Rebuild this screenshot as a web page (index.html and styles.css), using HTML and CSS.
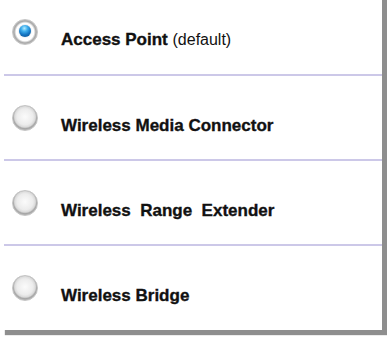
FILE: index.html
```html
<!DOCTYPE html>
<html>
<head>
<meta charset="utf-8">
<link rel="stylesheet" href="styles.css">
</head>
<body>
<div class="card">
  <div class="option first">
    <span class="radio checked"></span>
    <span class="label"><b>Access Point</b> <span class="note">(default)</span></span>
  </div>
  <div class="option">
    <span class="radio"></span>
    <span class="label"><b>Wireless Media Connector</b></span>
  </div>
  <div class="option">
    <span class="radio"></span>
    <span class="label"><b class="wide">Wireless  Range  Extender</b></span>
  </div>
  <div class="option last">
    <span class="radio"></span>
    <span class="label"><b>Wireless Bridge</b></span>
  </div>
</div>
</body>
</html>
```
FILE: styles.css
```css
html, body {
  margin: 0;
  background: #ffffff;
}
body {
  min-height: 337px;
  font-family: "Liberation Sans", Arial, sans-serif;
  color: #111;
  overflow: hidden;
}
.card {
  width: 382px;
  height: 340px;
  margin-top: -10px;
  padding: 10px 0 0 4px;
  box-sizing: border-box;
  background: #fff;
  box-shadow: 5px 5px 1px #8e8e8e;
}
.option {
  display: flex;
  align-items: center;
  height: 85px;
  padding-top: 16px;
  box-sizing: border-box;
  border-bottom: 2px solid #ccc8e8;
}
.option.first {
  height: 76px;
  padding-top: 5px;
}
.option.last {
  height: 84px;
  border-bottom: none;
}
.radio {
  flex: none;
  width: 26px;
  height: 26px;
  margin-left: 8px;
  margin-bottom: 16px;
  border-radius: 50%;
  box-sizing: border-box;
  border: 1px solid #c4c4c4;
  background: radial-gradient(circle at 50% 45%, #fbfbfb 0%, #ececec 45%, #dadada 58%, #a6a6a6 66%, #bdbdbd 78%, #e2e2e2 92%, #d0d0d0 100%);
  position: relative;
}
.radio.checked {
  background: radial-gradient(circle at 50% 50%, #ffffff 0%, #ffffff 52%, #a8a8a8 64%, #c4c4c4 78%, #e4e4e4 92%, #cccccc 100%);
}
.radio.checked::after {
  content: "";
  position: absolute;
  left: 6px;
  top: 5px;
  width: 12px;
  height: 12px;
  border-radius: 50%;
  background: radial-gradient(circle at 45% 28%, #b4ecff 0%, #40b0ee 28%, #1577c4 58%, #0a4682 100%);
  box-shadow: 0 0 1px #5a7fa0;
}
.label {
  margin-left: 23px;
  font-size: 17px;
  line-height: 20px;
  -webkit-text-stroke: 0.35px #111;
}
.label b {
  font-weight: bold;
}
.wide {
  white-space: pre;
}
.note {
  font-size: 16px;
  font-weight: normal;
  -webkit-text-stroke: 0;
}
```
